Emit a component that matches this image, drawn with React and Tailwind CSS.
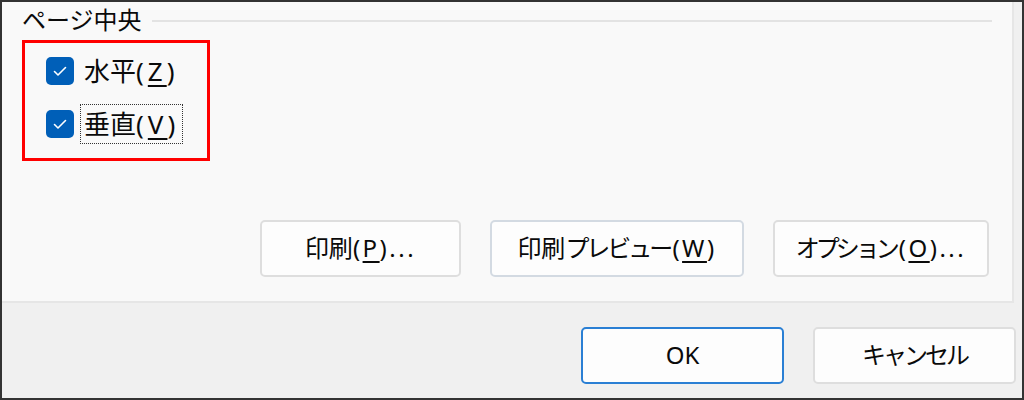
import React from "react";

const FONT = { fontFamily: '"Noto Sans", "Noto Sans CJK JP", sans-serif' };

function Check() {
  return (
    <div className="w-[28px] h-[28px] rounded-[5px] bg-[#005fb8] flex items-center justify-center shrink-0">
      <svg width="16" height="16" viewBox="0 0 16 16" fill="none">
        <path d="M2.5 8.5 L6 12 L13.5 4.5" stroke="#ffffff" strokeWidth="1.6" strokeLinecap="round" strokeLinejoin="round" />
      </svg>
    </div>
  );
}

function U({ children }) {
  return <span className="underline underline-offset-[4px] decoration-[1.5px]">{children}</span>;
}

function Btn({ children, w, primary, blueish }) {
  return (
    <div
      className={
        "h-[57px] rounded-[5px] bg-[#fdfdfd] flex items-center justify-center text-[24px] leading-none text-[#0a0a0a] " +
        (primary
          ? "border-2 border-[#2a7fd4]"
          : blueish
          ? "border-2 border-[#d3dae2]"
          : "border-2 border-[#dedede]")
      }
      style={{ width: w }}
    >
      <span className="pb-[2px] whitespace-nowrap">{children}</span>
    </div>
  );
}

export default function App() {
  return (
    <div
      className="w-[1024px] h-[400px] border-2 border-[#333333] bg-[#f0f0f0] flex flex-col overflow-hidden"
      style={FONT}
    >
      <div className="h-[301px] mr-[8px] bg-[#f9f9f9] border-r-2 border-b-2 border-[#e6e6e6] flex flex-col shrink-0">
        <div className="flex items-center h-[28px] mt-[4px] pl-[20px] pr-[20px]">
          <span className="text-[24px] leading-none text-[#0a0a0a]">ページ中央</span>
          <div className="flex-1 h-[2px] bg-[#e3e3e3] ml-[10px] mt-[2px]" />
        </div>
        <div className="ml-[20px] mt-[6px] w-[188px] h-[121px] border-[3px] border-[#ff0000] flex flex-col pl-[21px] pt-[14px] gap-[25px]">
          <div className="flex items-center h-[28px]">
            <Check />
            <span className="ml-[10px] text-[26px] leading-none text-[#0a0a0a] whitespace-nowrap">
              水平<span className="tracking-[4px]">(<U>Z</U>)</span>
            </span>
          </div>
          <div className="flex items-center h-[28px]">
            <Check />
            <span className="ml-[6px] h-[40px] pl-[3px] pr-[3px] flex items-center border border-dotted border-[#333] text-[26px] leading-none text-[#0a0a0a] whitespace-nowrap">
              垂直<span className="tracking-[4px]">(<U>V</U>)</span>
            </span>
          </div>
        </div>
        <div className="flex justify-end gap-[29px] mt-[59px] pr-[23px]">
          <Btn w="201px">
            印刷<span className="tracking-[2.5px]">(<U>P</U>)...</span>
          </Btn>
          <Btn w="254px" blueish>
            印刷<span className="tracking-[-3px]">プレビュー</span>
            <span className="tracking-[2.5px] ml-[2px]">(<U>W</U>)</span>
          </Btn>
          <Btn w="216px">
            <span className="tracking-[-4px]">オプション</span>
            <span className="tracking-[2.5px] ml-[3px]">(<U>O</U>)...</span>
          </Btn>
        </div>
      </div>
      <div className="flex justify-end gap-[29px] mt-[24px] pr-[6px]">
        <Btn w="203px" primary>OK</Btn>
        <Btn w="203px">
          <span className="tracking-[-3px]">キャンセル</span>
        </Btn>
      </div>
    </div>
  );
}
